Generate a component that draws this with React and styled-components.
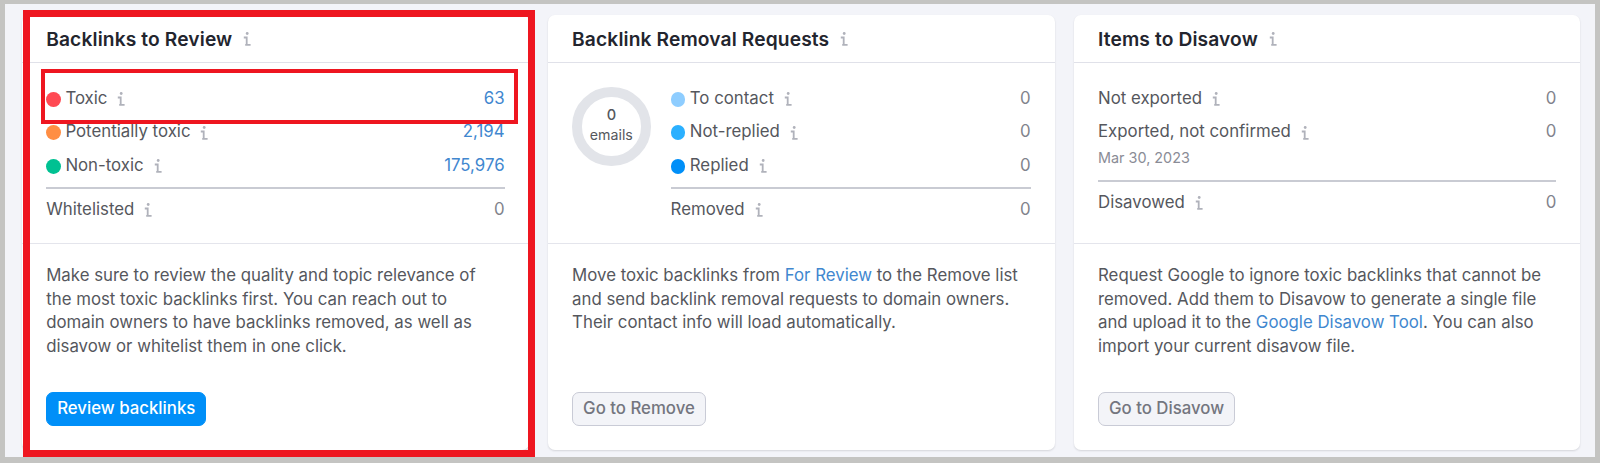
import styled, { createGlobalStyle } from 'styled-components';

const GlobalStyle = createGlobalStyle`
  * {
    box-sizing: border-box;
  }

  body {
    margin: 0;
    font-family: Inter, 'Liberation Sans', sans-serif;
    font-size: 16.82px;
    line-height: 23.6px;
    color: #55575d;
  }
`;

const Page = styled.main`
  display: grid;
  grid-template-columns: repeat(3, 1fr);
  gap: 19.5px;
  height: 463px;
  padding: 10.5px 14.6px 7px 17.2px;
  border: solid #c4c4c2;
  border-width: 4px 5px 6px 5px;
  background: #f3f4f9;
`;

const Card = styled.section`
  position: relative;
  display: flex;
  flex-direction: column;
  border-radius: 7px;
  background: #fff;
  box-shadow: 0 1px 2px rgba(25, 27, 35, 0.14);
`;

const CardHeader = styled.header`
  display: flex;
  align-items: center;
  gap: 11px;
  height: 48.5px;
  padding: 3px 24px 0;
  border-bottom: 1px solid #e0e1e9;

  svg {
    margin-bottom: 2px;
  }
`;

const Title = styled.h2`
  margin: 0;
  font-size: 19.2px;
  font-weight: 600;
  letter-spacing: 0.13px;
  color: #23252e;
`;

const Stats = styled.div`
  display: flex;
  gap: 20px;
  height: 181px;
  padding: 24px 24px 0;
  border-bottom: 1px solid #e4e5ec;
`;

const List = styled.div`
  flex: 1;
`;

const Row = styled.div`
  display: flex;
  align-items: center;
  height: 23.6px;

  & + & {
    margin-top: 9.8px;
  }
`;

const Dot = styled.span`
  width: 14.8px;
  height: 14.8px;
  margin: 1.4px 4.4px 0 0;
  border-radius: 50%;
  background: ${({ $color }) => $color};
`;

const RowIcon = styled.span`
  display: flex;
  margin: 1px 0 0 10px;
`;

const Value = styled.span`
  margin-left: auto;
  color: ${({ $link }) => ($link ? '#4187cf' : '#81838c')};
`;

const Note = styled.div`
  margin-top: 4.5px;
  font-size: 14.4px;
  line-height: 20px;
  color: #8a8c96;
`;

const Divider = styled.hr`
  height: 1.5px;
  margin: ${({ $top }) => $top}px 0 9px;
  border: 0;
  background: #c9cbd3;
`;

const Donut = styled.div`
  display: flex;
  flex-direction: column;
  align-items: center;
  justify-content: center;
  width: 78.5px;
  height: 78.5px;
  padding-bottom: 3px;
  border: 10px solid #e2e4e9;
  border-radius: 50%;
  font-size: 14.2px;
  line-height: 19px;
`;

const DonutValue = styled.span`
  font-size: 14.6px;
  font-weight: 500;
`;

const Details = styled.div`
  flex: 1;
  display: flex;
  flex-direction: column;
  align-items: flex-start;
  padding: 19.8px 20px 24.5px 24px;
`;

const Text = styled.p`
  margin: 0;
  line-height: 23.7px;
`;

const Link = styled.a`
  color: #4187cf;
  text-decoration: none;
`;

const Button = styled.button`
  height: 33.4px;
  margin-top: auto;
  padding: 0 10px 2px;
  border: 1.5px solid ${({ $primary }) => ($primary ? '#008ff8' : '#c9cbd6')};
  border-radius: 7px;
  background: ${({ $primary }) => ($primary ? '#008ff8' : '#f3f4f8')};
  color: ${({ $primary }) => ($primary ? '#fff' : '#74767f')};
  font: 500 16.8px Inter, 'Liberation Sans', sans-serif;
`;

// Red frames drawn over the card to point out a block or a row
const Highlight = styled.div`
  position: absolute;
  pointer-events: none;
  border: ${({ $width }) => $width}px solid #ee1620;
`;

const CardHighlight = styled(Highlight)`
  inset: -4.5px -6.5px -7px 1px;
`;

const RowHighlight = styled(Highlight)`
  top: 54.5px;
  left: 18.5px;
  right: 10.8px;
  height: 55px;
`;

const InfoIcon = () => (
  <svg width="8" height="14" viewBox="0 0 8 14" fill="none" stroke="#b0b2bb" strokeWidth="1.8">
    <circle cx="4.2" cy="1.5" r="1.4" fill="#b0b2bb" stroke="none" />
    <path d="M0.8 5.5h2.9v7.3M2.2 12.8h5.4" />
  </svg>
);

const StatRow = ({ label, value, color, link }) => (
  <Row>
    {color && <Dot $color={color} />}
    {label}
    <RowIcon><InfoIcon /></RowIcon>
    <Value $link={link}>{value}</Value>
  </Row>
);

const CardTitle = ({ children }) => (
  <CardHeader>
    <Title>{children}</Title>
    <InfoIcon />
  </CardHeader>
);

export default function App() {
  return (
    <>
      <GlobalStyle />
      <Page>
        <Card>
          <CardTitle>Backlinks to Review</CardTitle>
          <Stats>
            <List>
              <StatRow label="Toxic" value="63" color="#ff4953" link />
              <StatRow label="Potentially toxic" value="2,194" color="#ff8e43" link />
              <StatRow label="Non-toxic" value="175,976" color="#00c192" link />
              <Divider $top={10} />
              <StatRow label="Whitelisted" value="0" />
            </List>
          </Stats>
          <Details>
            <Text>
              Make sure to review the quality and topic relevance of<br />
              the most toxic backlinks first. You can reach out to<br />
              domain owners to have backlinks removed, as well as<br />
              disavow or whitelist them in one click.
            </Text>
            <Button $primary>Review backlinks</Button>
          </Details>
          <RowHighlight $width={4} />
          <CardHighlight $width={7} />
        </Card>

        <Card>
          <CardTitle>Backlink Removal Requests</CardTitle>
          <Stats>
            <Donut>
              <DonutValue>0</DonutValue>
              <span>emails</span>
            </Donut>
            <List>
              <StatRow label="To contact" value="0" color="#8ecdff" />
              <StatRow label="Not-replied" value="0" color="#2bb0ff" />
              <StatRow label="Replied" value="0" color="#008ff8" />
              <Divider $top={10} />
              <StatRow label="Removed" value="0" />
            </List>
          </Stats>
          <Details>
            <Text>
              Move toxic backlinks from <Link>For Review</Link> to the Remove list<br />
              and send backlink removal requests to domain owners.<br />
              Their contact info will load automatically.
            </Text>
            <Button>Go to Remove</Button>
          </Details>
        </Card>

        <Card>
          <CardTitle>Items to Disavow</CardTitle>
          <Stats>
            <List>
              <StatRow label="Not exported" value="0" />
              <StatRow label="Exported, not confirmed" value="0" />
              <Note>Mar 30, 2023</Note>
              <Divider $top={12} />
              <StatRow label="Disavowed" value="0" />
            </List>
          </Stats>
          <Details>
            <Text>
              Request Google to ignore toxic backlinks that cannot be<br />
              removed. Add them to Disavow to generate a single file<br />
              and upload it to the <Link>Google Disavow Tool</Link>. You can also<br />
              import your current disavow file.
            </Text>
            <Button>Go to Disavow</Button>
          </Details>
        </Card>
      </Page>
    </>
  );
}
